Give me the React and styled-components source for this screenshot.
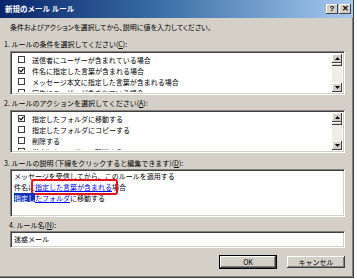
import styled, { createGlobalStyle } from "styled-components"

const Global = createGlobalStyle`
    html, body {
        margin: 0;
        padding: 0;
        background: #ffffff;
    }
    body {
        font-family: "Noto Sans CJK JP", "Noto Sans", sans-serif;
        color: #000000;
    }
`

const conditions = [
    { text: "送信者にユーザーが含まれている場合", checked: false },
    { text: "件名に指定した言葉が含まれる場合", checked: true },
    { text: "メッセージ本文に指定した言葉が含まれる場合", checked: false },
    { text: "宛先にユーザーが含まれている場合", checked: false },
]

const actions = [
    { text: "指定したフォルダに移動する", checked: true },
    { text: "指定したフォルダにコピーする", checked: false },
    { text: "削除する", checked: false },
    { text: "指定したユーザーに転送する", checked: false },
]

function Arrow({ down }) {
    return (
        <svg width="5" height="3" viewBox="0 0 5 3">
            {down ? <polygon points="0,0 5,0 2.5,3" fill="#000" /> : <polygon points="0,3 5,3 2.5,0" fill="#000" />}
        </svg>
    )
}

function CheckList({ items, height }) {
    return (
        <ListBox $h={height}>
            <Items>
                {items.map((item) => (
                    <Row key={item.text}>
                        <Check>
                            {item.checked && (
                                <svg width="5" height="5" viewBox="0 0 5 5">
                                    <polyline points="0.5,2.2 2,3.8 4.5,0.8" fill="none" stroke="#000" strokeWidth="1.2" />
                                </svg>
                            )}
                        </Check>
                        {item.text}
                    </Row>
                ))}
            </Items>
            <ScrollBar>
                <ScrollButton><Arrow /></ScrollButton>
                <Thumb />
                <Track />
                <ScrollButton><Arrow down /></ScrollButton>
            </ScrollBar>
        </ListBox>
    )
}

export default function App() {
    return (
        <>
            <Global />
            <Window>
                <TitleBar>
                    新規のメール ルール
                    <TitleButtons>
                        <TitleButton>?</TitleButton>
                        <TitleButton>✕</TitleButton>
                    </TitleButtons>
                </TitleBar>

                <Instruction>条件およびアクションを選択してから、説明に値を入力してください。</Instruction>

                <Label $mt={7}>1. ルールの条件を選択してください(<u>C</u>):</Label>
                <CheckList items={conditions} height={44} />

                <Label $mt={3}>2. ルールのアクションを選択してください(<u>A</u>):</Label>
                <CheckList items={actions} height={43} />

                <Label $mt={5}>3. ルールの説明 (下線をクリックすると編集できます)(<u>D</u>):</Label>
                <Description>
                    <Line>メッセージを受信してから、このルールを適用する</Line>
                    <Line>件名に<Link $marked>指定した言葉が含まれる</Link>場合</Line>
                    <Line><Link $focused>指定し</Link><Link>たフォルダ</Link>に移動する</Line>
                </Description>

                <Label $mt={3} $indent={9}>4. ルール名(<u>N</u>):</Label>
                <NameInput>迷惑メール</NameInput>

                <Footer>
                    <Button $default $w={58}>OK</Button>
                    <Button $w={60}>キャンセル</Button>
                </Footer>
            </Window>
        </>
    )
}

const Window = styled.div`
    width: 354px;
    height: 278px;
    box-sizing: border-box;
    background-color: #D4D0C8;
    border-right: 1px solid #404040;
    border-bottom: 1px solid #404040;
    box-shadow: inset -1px -1px 0 #808080;
    display: flex;
    flex-direction: column;
    font-size: 7px;
    line-height: 10px;
`

const TitleBar = styled.div`
    height: 18px;
    flex-shrink: 0;
    display: flex;
    align-items: center;
    padding: 0 2px 0 5px;
    background: linear-gradient(to right, #0A246A 0%, #3A6EA5 45%, #A6CAF0 100%);
    color: #ffffff;
    font-size: 7.5px;
    font-weight: bold;
`

const TitleButtons = styled.div`
    margin-left: auto;
    display: flex;
    gap: 1px;
`

const TitleButton = styled.div`
    width: 12px;
    height: 10px;
    background-color: #D4D0C8;
    box-shadow: inset -1px -1px 0 #404040, inset 1px 1px 0 #ffffff;
    color: #000000;
    font-family: "Liberation Sans", sans-serif;
    font-size: 8px;
    font-weight: bold;
    line-height: 10px;
    text-align: center;
`

const Instruction = styled.div`
    margin: 4px 0 0 10px;
    font-feature-settings: "palt";
`

const Label = styled.div`
    margin-top: ${(p) => p.$mt}px;
    margin-left: ${(p) => p.$indent || 4}px;
    u {
        text-decoration: underline;
    }
`

const sunken = `
    background-color: #ffffff;
    border-top: 1px solid #808080;
    border-left: 1px solid #808080;
    border-bottom: 1px solid #ffffff;
    border-right: 1px solid #ffffff;
    box-shadow: inset 1px 1px 0 #404040, inset -1px -1px 0 #D4D0C8;
    box-sizing: border-box;
`

const ListBox = styled.div`
    ${sunken}
    margin: 2px 0 0 10px;
    width: 335px;
    height: ${(p) => p.$h}px;
    display: flex;
    padding: 2px 2px 2px 2px;
    overflow: hidden;
`

const Items = styled.div`
    flex: 1;
    padding-left: 5px;
    overflow: hidden;
`

const Row = styled.div`
    height: 11px;
    display: flex;
    align-items: center;
    gap: 7px;
    white-space: nowrap;
`

const Check = styled.span`
    width: 7px;
    height: 7px;
    box-sizing: border-box;
    border: 1px solid #404040;
    background: #ffffff;
    display: flex;
    align-items: center;
    justify-content: center;
`

const ScrollBar = styled.div`
    width: 10px;
    display: flex;
    flex-direction: column;
    background-color: #EEEDE8;
`

const ScrollButton = styled.div`
    height: 9px;
    flex-shrink: 0;
    background-color: #D4D0C8;
    box-shadow: inset -1px -1px 0 #404040, inset 1px 1px 0 #ffffff;
    display: flex;
    align-items: center;
    justify-content: center;
`

const Thumb = styled.div`
    height: 3px;
    background-color: #D4D0C8;
    box-shadow: inset -1px -1px 0 #404040, inset 1px 1px 0 #ffffff;
`

const Track = styled.div`
    flex: 1;
`

const Description = styled.div`
    ${sunken}
    margin: 1px 0 0 10px;
    width: 335px;
    height: 48px;
    padding: 1px 3px;
`

const Line = styled.div`
    height: 11px;
    line-height: 11px;
    white-space: nowrap;
`

const Link = styled.span`
    position: relative;
    color: #0000EE;
    text-decoration: underline;
    ${(p) => p.$focused && `
        background-color: #1030C0;
        color: #ffffff;
    `}
    ${(p) => p.$marked && `
        &::after {
            content: "";
            position: absolute;
            left: -4px;
            right: -6px;
            top: -3px;
            bottom: -3px;
            border: 2.5px solid #E8101A;
            border-radius: 3px;
        }
    `}
`

const NameInput = styled.div`
    ${sunken}
    margin: 1px 0 0 10px;
    width: 335px;
    height: 17px;
    padding: 0 3px;
    line-height: 15px;
`

const Footer = styled.div`
    display: flex;
    justify-content: flex-end;
    gap: 9px;
    margin-top: 7px;
    padding-right: 7px;
`

const Button = styled.div`
    width: ${(p) => p.$w}px;
    height: 14px;
    box-sizing: border-box;
    background-color: #D4D0C8;
    border: 1px solid ${(p) => (p.$default ? "#000000" : "transparent")};
    box-shadow: inset -1px -1px 0 #404040, inset 1px 1px 0 #ffffff, inset -2px -2px 0 #808080;
    display: flex;
    align-items: center;
    justify-content: center;
    font-size: 7px;
`
